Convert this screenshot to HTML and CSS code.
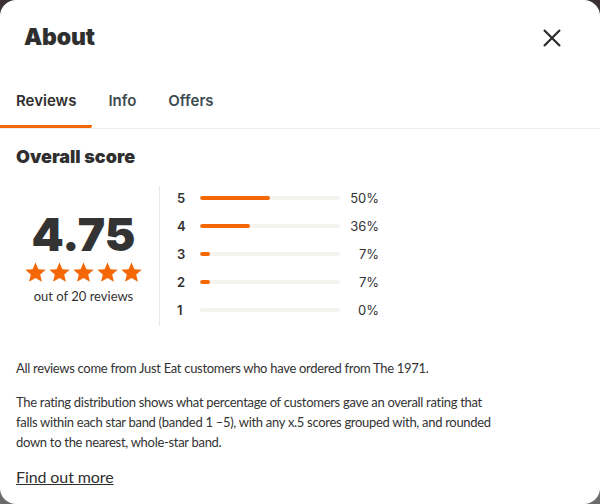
FILE: index.html
```html
<!DOCTYPE html>
<html>
<head>
<meta charset="utf-8">
<link rel="stylesheet" href="styles.css">
</head>
<body>
<div class="modal">
  <header class="head">
    <h1 class="title">About</h1>
    <button class="close" aria-label="Close">
      <svg width="20" height="20" viewBox="0 0 20 20"><path d="M2 2L18 18M18 2L2 18" stroke="#2a2a2a" stroke-width="2.2" fill="none"/></svg>
    </button>
  </header>
  <nav class="tabs">
    <div class="tab active">Reviews</div>
    <div class="tab">Info</div>
    <div class="tab">Offers</div>
  </nav>
  <section class="content">
    <h2 class="section-title">Overall score</h2>
    <div class="score">
      <div class="summary">
        <div class="big">4.75</div>
        <div class="stars">
          <svg viewBox="0 0 24 24"><path d="M12 1.5l3.1 7.1 7.6.6-5.8 5 1.8 7.5L12 17.7l-6.7 4 1.8-7.5-5.8-5 7.6-.6z"/></svg>
          <svg viewBox="0 0 24 24"><path d="M12 1.5l3.1 7.1 7.6.6-5.8 5 1.8 7.5L12 17.7l-6.7 4 1.8-7.5-5.8-5 7.6-.6z"/></svg>
          <svg viewBox="0 0 24 24"><path d="M12 1.5l3.1 7.1 7.6.6-5.8 5 1.8 7.5L12 17.7l-6.7 4 1.8-7.5-5.8-5 7.6-.6z"/></svg>
          <svg viewBox="0 0 24 24"><path d="M12 1.5l3.1 7.1 7.6.6-5.8 5 1.8 7.5L12 17.7l-6.7 4 1.8-7.5-5.8-5 7.6-.6z"/></svg>
          <svg viewBox="0 0 24 24"><path d="M12 1.5l3.1 7.1 7.6.6-5.8 5 1.8 7.5L12 17.7l-6.7 4 1.8-7.5-5.8-5 7.6-.6z"/></svg>
        </div>
        <div class="count">out of 20 reviews</div>
      </div>
      <div class="dist">
        <div class="row"><span class="n">5</span><span class="bar"><span class="fill" style="width:50%"></span></span><span class="pct">50%</span></div>
        <div class="row"><span class="n">4</span><span class="bar"><span class="fill" style="width:36%"></span></span><span class="pct">36%</span></div>
        <div class="row"><span class="n">3</span><span class="bar"><span class="fill" style="width:7%"></span></span><span class="pct">7%</span></div>
        <div class="row"><span class="n">2</span><span class="bar"><span class="fill" style="width:7%"></span></span><span class="pct">7%</span></div>
        <div class="row"><span class="n">1</span><span class="bar"><span class="fill" style="width:0%"></span></span><span class="pct">0%</span></div>
      </div>
    </div>
    <p class="txt first">All reviews come from Just Eat customers who have ordered from The 1971.</p>
    <p class="txt">The rating distribution shows what percentage of customers gave an overall rating that falls within each star band (banded 1 –5), with any x.5 scores grouped with, and rounded down to the nearest, whole-star band.</p>
    <a class="more" href="#">Find out more</a>
  </section>
</div>
</body>
</html>
```
FILE: styles.css
```css
* { box-sizing: border-box; }
html, body { margin: 0; padding: 0; }
body {
  width: 600px;
  height: 504px;
  background: linear-gradient(180deg, #3b3032 0%, #555 50%, #6b6b6b 100%);
  font-family: Lato, "Noto Sans", sans-serif;
  color: #333;
  overflow: hidden;
}
.modal {
  width: 600px;
  height: 504px;
  background: #fff;
  border-radius: 16px;
  overflow: hidden;
}
.head {
  display: flex;
  justify-content: space-between;
  align-items: center;
  padding: 18px 38px 0 24px;
  height: 56px;
}
.title {
  margin: 0;
  font-family: Inter, sans-serif;
  font-weight: 900;
  font-size: 23px;
  letter-spacing: -0.2px;
  color: #2f2f2f;
}
.close {
  border: 0;
  background: none;
  padding: 0;
  width: 20px;
  height: 20px;
  display: block;
  margin-top: 2px;
}
.close svg { display: block; }
.tabs {
  display: flex;
  margin-top: 17px;
  border-bottom: 1px solid #ececec;
  height: 56px;
}
.tab {
  font-family: Inter, sans-serif;
  font-weight: 600;
  font-size: 15px;
  color: #3d4b4f;
  padding: 18px 16px 0;
  height: 55px;
}
.tab.active {
  color: #2f2f2f;
  border-bottom: 3px solid #f36805;
  border-radius: 0 2px 2px 0;
  height: 55px;
  margin-bottom: -1px;
}
.content { padding: 0 16px; }
.section-title {
  margin: 17px 0 0;
  font-family: Inter, sans-serif;
  font-weight: 900;
  font-size: 18px;
  color: #2f2f2f;
  line-height: 22px;
}
.score {
  display: flex;
  margin-top: 18px;
  align-items: stretch;
}
.summary {
  width: 144px;
  padding-right: 8px;
  border-right: 1px solid #e8e8e8;
  display: flex;
  flex-direction: column;
  align-items: center;
  justify-content: center;
  height: 140px;
}
.big {
  font-family: Inter, sans-serif;
  font-weight: 900;
  font-size: 46px;
  line-height: 44px;
  letter-spacing: 0;
  color: #333;
  margin-top: 4px;
}
.stars {
  display: flex;
  gap: 1px;
  margin-top: 5px;
}
.stars svg { width: 23px; height: 23px; fill: #f36805; display: block; }
.count {
  font-size: 13px;
  margin-top: 4px;
  color: #333;
}
.dist {
  flex: 1;
  padding-left: 17px;
  margin-top: -2px;
}
.row {
  display: flex;
  align-items: center;
  height: 28px;
  font-family: Inter, sans-serif;
  font-size: 13px;
}
.n { width: 23px; font-weight: 600; color: #333; }
.bar {
  width: 140px;
  height: 4px;
  border-radius: 2px;
  background: #f5f3f0;
  overflow: hidden;
}
.fill {
  display: block;
  height: 100%;
  background: #f36805;
  border-radius: 2px;
}
.pct { width: 39px; text-align: right; color: #333; }
.txt {
  margin: 0;
  max-width: 490px;
  font-size: 13px;
  line-height: 20px;
  letter-spacing: -0.3px;
  color: #333;
}
.txt.first { margin-top: 32px; margin-bottom: 14px; }
.more {
  display: inline-block;
  margin-top: 15px;
  font-size: 16px;
  letter-spacing: -0.1px;
  color: #2f2f2f;
  text-decoration: underline;
}
```
